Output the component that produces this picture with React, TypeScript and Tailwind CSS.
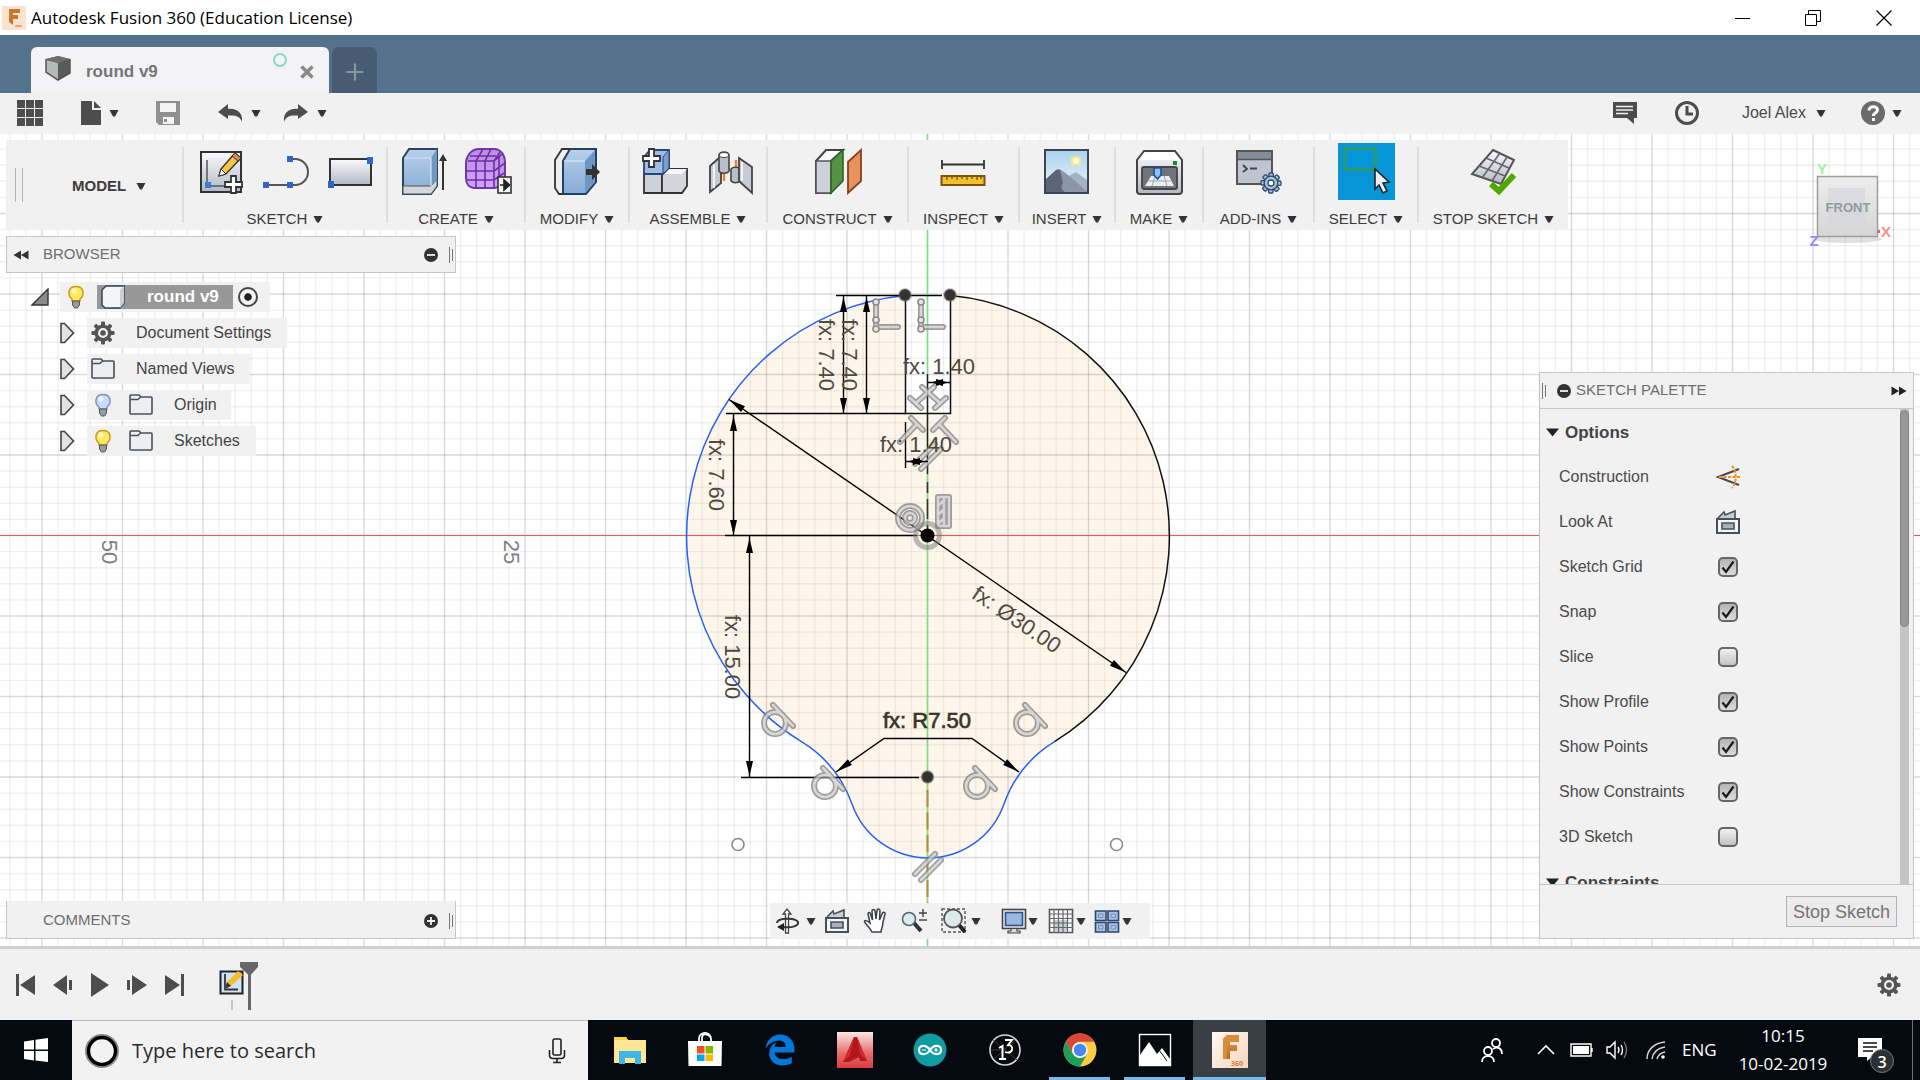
import React from 'react';
import { FaEdgeLegacy } from 'react-icons/fa';

type IconProps = { children: React.ReactNode; box?: number; className?: string };

const Icon: React.FC<IconProps> = ({ children, box = 48, className = 'size-12' }) => (
  <svg viewBox={`0 0 ${box} ${box}`} className={className} fill="none" aria-hidden="true">
    {children}
  </svg>
);

const Caret: React.FC = () => (
  <svg viewBox="0 0 10 8" className="h-2 w-2.5 shrink-0" aria-hidden="true">
    <path d="M0.5 1H9.5L6 7.5H4Z" fill="#333" />
  </svg>
);

const Gear: React.FC<{ color: string; hole: string }> = ({ color, hole }) => (
  <Icon box={24} className="size-6">
    {[0, 45, 90, 135, 180, 225, 270, 315].map((a) => (
      <rect key={a} x="10" y="0.5" width="4" height="6" rx="1" fill={color} transform={`rotate(${a} 12 12)`} />
    ))}
    <circle cx="12" cy="12" r="6.8" stroke={color} strokeWidth="3.6" fill={hole} />
    <circle cx="12" cy="12" r="2.8" fill={color} />
  </Icon>
);

const Defs: React.FC = () => (
  <svg className="absolute size-0" aria-hidden="true">
    <defs>
      <linearGradient id="steel" x1="0" y1="0" x2="0" y2="1">
        <stop offset="0" stopColor="#fbfbfc" />
        <stop offset="1" stopColor="#b3b8c6" />
      </linearGradient>
      <linearGradient id="blue" x1="0" y1="0" x2="0" y2="1">
        <stop offset="0" stopColor="#b9d0ea" />
        <stop offset="1" stopColor="#86abd6" />
      </linearGradient>
      <linearGradient id="purple" x1="0" y1="0" x2="0" y2="1">
        <stop offset="0" stopColor="#b98be0" />
        <stop offset="1" stopColor="#d3a2ff" />
      </linearGradient>
      <linearGradient id="sky" x1="0" y1="0" x2="0" y2="1">
        <stop offset="0" stopColor="#a9d3ec" />
        <stop offset="1" stopColor="#eef8fc" />
      </linearGradient>
      <linearGradient id="cad" x1="0" y1="0" x2="0" y2="1">
        <stop offset="0" stopColor="#fbe9e4" />
        <stop offset="0.6" stopColor="#e8696a" />
        <stop offset="1" stopColor="#dc3a43" />
      </linearGradient>
      <linearGradient id="peach" x1="0" y1="0" x2="1" y2="1">
        <stop offset="0" stopColor="#fffaf6" />
        <stop offset="1" stopColor="#f8d5ba" />
      </linearGradient>
      <linearGradient id="fold" x1="0" y1="0" x2="0" y2="1">
        <stop offset="0" stopColor="#e39a4a" />
        <stop offset="1" stopColor="#b96a1f" />
      </linearGradient>
      <linearGradient id="cube" x1="0" y1="0" x2="0" y2="1">
        <stop offset="0" stopColor="#ececec" />
        <stop offset="1" stopColor="#d2d2d2" />
      </linearGradient>
    </defs>
  </svg>
);

/* ---------- toolbar icons ---------- */

const NewSketchIcon = () => (
  <Icon>
    <rect x="4" y="4" width="40" height="40" fill="url(#steel)" stroke="#333" strokeWidth="2" />
    <path d="M10 12V38H36" stroke="#555" strokeWidth="1.5" />
    <rect x="8" y="34" width="6" height="6" fill="#3b7fd4" />
    <path d="M38 5L44 10L29 26L22 28L24 21Z" fill="#f6c544" stroke="#333" strokeWidth="1.4" />
    <path d="M38 5L44 10L41 13L35 8Z" fill="#d98d52" stroke="#333" />
    <path d="M24 21L29 26L22 28Z" fill="#fff" stroke="#333" />
    <path d="M34 28H39V34H45V39H39V45H34V39H28V34H34Z" fill="#fff" stroke="#333" strokeWidth="1.8" />
  </Icon>
);

const LineIcon = () => (
  <Icon>
    <path d="M29 11H34A13 13 0 0 1 34 37H5" stroke="#555" strokeWidth="2" />
    <path d="M26 8h6v6h-6zM2 34h6v6H2zM26 34h6v6h-6z" fill="#2f66cc" />
  </Icon>
);

const RectangleIcon = () => (
  <Icon>
    <rect x="5" y="11" width="41" height="26" fill="url(#steel)" stroke="#333" strokeWidth="2" />
    <path d="M42 9h6v7h-6zM3 33h6v7H3z" fill="#2f66cc" />
  </Icon>
);

const ExtrudeIcon = () => (
  <Icon>
    <path d="M3 10L9 1H37V38L31 46H3Z" fill="url(#blue)" stroke="#2c4260" strokeWidth="2" />
    <path d="M3 38H31L37 31V38L31 46H3Z" fill="#d3d6dd" stroke="#555" />
    <path d="M31 10L37 1V31L31 38Z" fill="#6f97c6" />
    <path d="M4 10H31V38" stroke="#d8e6f5" strokeWidth="1.2" />
    <path d="M43 42V10" stroke="#333" strokeWidth="2" />
    <path d="M39 13L43 6L47 13Z" fill="#333" />
  </Icon>
);

const FormIcon = () => (
  <Icon>
    <path d="M2 16C2 7 8 1 15 1H31C38 2 41 8 41 14V30C40 37 36 40 30 40H10C4 39 2 36 2 30Z" fill="url(#purple)" stroke="#7038a8" strokeWidth="2" />
    <path d="M2 23H30L41 15M3 32H30L40 25M4 13H30L38 6M12 40V13L19 1M21 40V13L27 1M30 40V13L36 4M6 8H32M35 36V9" stroke="#6b2fa3" strokeWidth="1.6" />
    <rect x="34" y="29" width="13" height="16" fill="#f4f4f4" stroke="#333" strokeWidth="1.6" />
    <path d="M36 37H40M40 32V42L45.500 37Z" stroke="#222" fill="#222" strokeWidth="1.6" />
  </Icon>
);

const PressPullIcon = () => (
  <Icon>
    <path d="M2 12L9 1H18L12 12V46H6L2 40Z" fill="#eceef2" stroke="#333" strokeWidth="1.8" />
    <path d="M10 13L17 1H43V34L33 46H10Z" fill="url(#blue)" stroke="#24405f" strokeWidth="2" />
    <path d="M32 13L42 2V34L32 45Z" fill="#6f97c6" />
    <path d="M11 13H32" stroke="#dbe8f5" strokeWidth="1.2" />
    <path d="M33 21H39V16L47 24L39 32V27H33Z" fill="#333" />
  </Icon>
);

const ComponentIcon = () => (
  <Icon>
    <path d="M2 26H20V45H2Z" fill="#cdd1d9" stroke="#333" strokeWidth="1.8" />
    <path d="M20 26L26 21H45V38L40 45H20Z" fill="#d3d6dd" stroke="#333" strokeWidth="1.8" />
    <path d="M20 26L26 21H45L40 26Z" fill="#f6f6f6" />
    <path d="M2 9L8 2H27V20L21 26H2Z" fill="#9dbde5" stroke="#27457a" strokeWidth="1.8" />
    <path d="M21 9L27 2V20L21 26Z" fill="#7d9fcc" stroke="#27457a" />
    <path d="M7 1H12V8H18V13H12V19H7V13H1V8H7Z" fill="#fff" stroke="#333" strokeWidth="1.8" />
  </Icon>
);

const JointIcon = () => (
  <Icon>
    <path d="M18 22V33M30 12V22" stroke="#f08020" strokeWidth="2.4" />
    <path d="M4 18L15 8V35L4 44Z" fill="#c5cad4" stroke="#444" strokeWidth="1.8" />
    <path d="M8 16V40" stroke="#f2f3f6" strokeWidth="2" />
    <path d="M13 7A5 3 0 0 1 23 7V21A5 3 0 0 1 13 23Z" fill="#b9bec9" stroke="#444" strokeWidth="1.6" />
    <ellipse cx="18" cy="7" rx="4.500" ry="2.500" fill="#fff" stroke="#444" />
    <path d="M25 21A5 3 0 0 1 34 21V33A5 3 0 0 1 25 33Z" fill="#b9bec9" stroke="#444" strokeWidth="1.6" />
    <path d="M33 10L46 19V45L33 33Z" fill="#c5cad4" stroke="#444" strokeWidth="1.8" />
    <path d="M36 14V33" stroke="#f2f3f6" strokeWidth="2" />
  </Icon>
);

const PlaneIcon = () => (
  <Icon>
    <path d="M2 13L12 2H29L17 13V45H2Z" fill="#fbfbfb" stroke="#444" strokeWidth="2" />
    <path d="M2 13H17V45H2Z" fill="#cdd1dc" stroke="#555" strokeWidth="1.6" />
    <path d="M17 13L29 2V33L17 45Z" fill="#559243" stroke="#2c6620" strokeWidth="1.6" />
    <path d="M34 14L47 2V33L34 45Z" fill="#e6935f" stroke="#8a4019" strokeWidth="1.8" />
  </Icon>
);

const MeasureIcon = () => (
  <Icon>
    <path d="M2 12V21M44 12V21M2 16.500H44" stroke="#333" strokeWidth="1.8" />
    <rect x="1.500" y="28" width="43" height="9" fill="#f2c02c" stroke="#7a5410" strokeWidth="2" />
    <path d="M7 28v4M12 28v3M17 28v4M22 28v3M27 28v4M32 28v3M37 28v4M41 28v3" stroke="#7a5410" strokeWidth="1.3" />
  </Icon>
);

const CanvasIcon = () => (
  <Icon>
    <rect x="2" y="2" width="43" height="43" fill="url(#sky)" stroke="#3a4658" strokeWidth="2" />
    <rect x="29" y="9" width="8" height="8" rx="3" fill="#fffbe0" stroke="#fbe395" strokeWidth="2" />
    <path d="M22 30L33 24L44 32V44H26Z" fill="#a5b3c1" />
    <path d="M3 31L13 22Q16 20 19 23L44 44H3Z" fill="#5d6475" />
    <path d="M17 22Q22 23 44 44H22Q16 40 20 35Z" fill="#8b96a8" />
  </Icon>
);

const PrintIcon = () => (
  <Icon>
    <path d="M2 12L9 3H40L47 12V43Q47 46 44 46H5Q2 46 2 43Z" fill="url(#steel)" stroke="#444" strokeWidth="2" />
    <path d="M4 12L10 4.500H39L45 12Z" fill="#fff" />
    <rect x="7" y="19" width="35" height="22" rx="2" fill="#6f737c" stroke="#444" strokeWidth="1.800" />
    <path d="M16 28H34L39 38H10Z" fill="#eceef2" />
    <path d="M13 33H37M20 28L17 38M29 28L32 38" stroke="#9aa" />
    <path d="M19 20H26V27L22.500 31L19 27Z" fill="#8fc0ee" stroke="#1d4f9c" strokeWidth="1.600" />
    <rect x="38" y="13" width="4" height="4" fill="#1d8a1d" />
  </Icon>
);

const ScriptIcon = () => (
  <Icon>
    <rect x="2" y="3" width="35" height="33" fill="#bfc4d1" stroke="#555" strokeWidth="2" />
    <rect x="3" y="4" width="33" height="7" fill="#868b97" />
    <path d="M2 11.500H37" stroke="#555" strokeWidth="1.500" />
    <path d="M8 17L12 21L8 24M15 20.500H22" stroke="#444" strokeWidth="1.800" />
    {[0, 45, 90, 135, 180, 225, 270, 315].map((a) => (
      <rect key={a} x="34" y="25" width="4.400" height="5" rx="1" fill="#a9c2e0" stroke="#2f4a6e" strokeWidth="1.300" transform={`rotate(${a} 36 35)`} />
    ))}
    <circle cx="36" cy="35" r="6.800" fill="#a9c2e0" stroke="#2f4a6e" strokeWidth="1.300" />
    <circle cx="36" cy="35" r="3" fill="#fff" stroke="#2f4a6e" strokeWidth="1.300" />
  </Icon>
);

const SelectIcon = () => (
  <Icon box={57} className="size-[57px] bg-[#0696d7]">
    <rect x="6.500" y="5.500" width="31" height="21" stroke="#3f9a3a" strokeWidth="2" />
    <path d="M37 26L51 39L45 40L49 48L45 50L41 42L37 46Z" fill="#eceef4" stroke="#222" strokeWidth="1.600" />
  </Icon>
);

const StopSketchIcon = () => (
  <Icon>
    <path d="M23 2L44 12L31 36L2 26Z" fill="url(#steel)" stroke="#555" strokeWidth="2" />
    <path d="M30 5L12 30M37 9L22 33M16 10L39 20M9 18L35 28" stroke="#666" strokeWidth="1.600" />
    <path d="M21 36L29 43L44 27" stroke="#4fa800" strokeWidth="6" />
  </Icon>
);

const toolGroups = [
  { label: 'SKETCH', width: 'w-[204px]', tools: [NewSketchIcon, LineIcon, RectangleIcon] },
  { label: 'CREATE', width: 'w-[138px]', tools: [ExtrudeIcon, FormIcon] },
  { label: 'MODIFY', width: 'w-[104px]', tools: [PressPullIcon] },
  { label: 'ASSEMBLE', width: 'w-[138px]', tools: [ComponentIcon, JointIcon] },
  { label: 'CONSTRUCT', width: 'w-[141px]', tools: [PlaneIcon] },
  { label: 'INSPECT', width: 'w-[111px]', tools: [MeasureIcon] },
  { label: 'INSERT', width: 'w-[96px]', tools: [CanvasIcon] },
  { label: 'MAKE', width: 'w-[88px]', tools: [PrintIcon] },
  { label: 'ADD-INS', width: 'w-[111px]', tools: [ScriptIcon] },
  { label: 'SELECT', width: 'w-[104px]', tools: [SelectIcon] },
  { label: 'STOP SKETCH', width: 'w-[151px]', tools: [StopSketchIcon] },
];

/* ---------- window chrome ---------- */

const TitleBar: React.FC = () => (
  <header className="flex h-[35px] items-center justify-between bg-white pl-0.5">
    <div className="flex items-center gap-[5px]">
      <Icon box={24} className="size-6">
        <rect width="24" height="24" fill="#fbe3cf" />
        <path d="M7 3H18V7H11V9H16V13H11V19L7 16Z" fill="#c8772c" />
        <path d="M13 20H20" stroke="#e6a878" strokeWidth="2" />
      </Icon>
      <h1 className="font-['Open_Sans',sans-serif] text-[17px] whitespace-nowrap text-black">Autodesk Fusion 360 (Education License)</h1>
    </div>
    <div className="flex h-full">
      <button aria-label="Minimize" className="grid w-[70px] place-items-center">
        <Icon box={16} className="size-4"><path d="M0 8.500H15" stroke="#000" /></Icon>
      </button>
      <button aria-label="Restore" className="grid w-[70px] place-items-center">
        <Icon box={16} className="size-4"><path d="M0.500 4.500h11v11h-11zM3.500 4V0.500h12v11H12" stroke="#000" /></Icon>
      </button>
      <button aria-label="Close" className="grid w-[72px] place-items-center">
        <Icon box={16} className="size-4"><path d="M0.500 0.500L15.500 15.500M15.500 0.500L0.500 15.500" stroke="#000" strokeWidth="1.200" /></Icon>
      </button>
    </div>
  </header>
);

const TabBar: React.FC = () => (
  <nav className="flex h-[58px] items-end gap-[3px] bg-[#55728d] pl-[31px]">
    <div className="flex h-[46px] w-[298px] items-center rounded-t-md bg-[#f3f3f5] pr-2.5 pl-3.5">
      <Icon box={26} className="mb-1 size-[26px]">
        <path d="M1 4L13 1L25 4V18L13 25L1 17Z" fill="#5a5a5a" />
        <path d="M1 5L13 8V25L1 17Z" fill="#b5b8b8" />
        <path d="M1 4L13 1L25 4L13 8Z" fill="#707070" />
        <path d="M1 4V17L13 25L25 18V4" stroke="#555" strokeWidth="1.500" />
      </Icon>
      <a href="#round" className="ml-[15px] grow pt-1 text-[17px] font-bold text-[#757575]">round v9</a>
      <span className="mr-2 mb-5 size-3.5 rounded-full border-2 border-[#8ed6c8]" />
      <button aria-label="Close tab" className="grid size-6 place-items-center pt-1">
        <Icon box={14} className="size-3.5"><path d="M1.500 1.500L12.500 12.500M12.500 1.500L1.500 12.500" stroke="#8b8b8b" strokeWidth="3.600" /></Icon>
      </button>
    </div>
    <button aria-label="New tab" className="grid h-[46px] w-[45px] place-items-center rounded-t-md bg-[#475c73] pt-1">
      <Icon box={18} className="size-[18px]"><path d="M9 0.500V17.500M0.500 9H17.500" stroke="#8b939c" strokeWidth="2.200" /></Icon>
    </button>
  </nav>
);

const QuickAccess: React.FC = () => (
  <div className="flex h-[41px] items-center justify-between bg-[#f1f1f1] pr-[18px] pb-0.5 pl-[17px]">
    <div className="flex items-center">
      <button aria-label="Data panel">
        <Icon box={26} className="size-[26px]">
          {[0, 9, 18].map((y) => [0, 9, 18].map((x) => <rect key={`${x}-${y}`} x={x} y={y} width="8" height="8" fill="#4d4d4d" />))}
        </Icon>
      </button>
      <button aria-label="File" className="ml-9 flex items-center gap-1">
        <Icon box={26} className="size-[26px]">
          <path d="M2 1H13V10H22V25H2Z" fill="#4d4d4d" />
          <path d="M15 1L22 8H15Z" fill="#4d4d4d" />
        </Icon>
        <Caret />
      </button>
      <button aria-label="Save" className="ml-9">
        <Icon box={26} className="size-[26px]">
          <path d="M1 1H25V25H4L1 22Z" fill="#8f8f8f" />
          <path d="M5 3H21V12H5ZM8 17H19V24H8Z" fill="#f4f4f4" />
          <rect x="9" y="19" width="3" height="3" fill="#8f8f8f" />
        </Icon>
      </button>
      <button aria-label="Undo" className="ml-9 flex items-center gap-2">
        <Icon box={26} className="size-[26px]">
          <path d="M1 12L11 4V9C20 8 26 13 25 22C23 16 19 15 11 15.500V19Z" fill="#4d4d4d" />
        </Icon>
        <Caret />
      </button>
      <button aria-label="Redo" className="ml-[22px] flex items-center gap-2">
        <Icon box={26} className="size-[26px]">
          <path d="M25 12L15 4V9C6 8 0 13 1 22C3 16 7 15 15 15.500V19Z" fill="#4d4d4d" />
        </Icon>
        <Caret />
      </button>
    </div>
    <div className="flex items-center">
      <button aria-label="Notifications">
        <Icon box={26} className="size-[26px]">
          <path d="M1 2H25V18H22V24L15 18H1Z" fill="#4d4d4d" />
          <path d="M4 6.500H21M4 10H21M4 13.500H16" stroke="#f1f1f1" strokeWidth="1.400" />
        </Icon>
      </button>
      <button aria-label="Job status" className="ml-9">
        <Icon box={26} className="size-[26px]">
          <circle cx="13" cy="13" r="10.500" stroke="#4d4d4d" strokeWidth="3" />
          <path d="M13 6V14H19" stroke="#4d4d4d" strokeWidth="3" />
        </Icon>
      </button>
      <button className="ml-[42px] flex items-center gap-2.5 text-base text-[#4a4a4a]">Joel Alex <Caret /></button>
      <button aria-label="Help" className="ml-[34px] flex items-center gap-1.5">
        <Icon box={26} className="size-[26px]">
          <circle cx="13" cy="13" r="12" fill="#6b6b6b" />
          <path d="M9 10.500C9 5.500 17.500 5.500 17.500 10C17.500 13 13.500 12.500 13.500 16M13.500 18V21" stroke="#fff" strokeWidth="3" />
        </Icon>
        <Caret />
      </button>
    </div>
  </div>
);

const Toolbar: React.FC = () => (
  <div className="flex items-stretch bg-[#f1f1f1]">
    <div className="flex w-[176px] items-center pl-[9px]">
      <span className="h-[34px] w-2 border-x border-[#b4b4b4]" />
      <button className="ml-[49px] flex items-center gap-2.5 pt-0.5 text-[15px] font-bold text-[#3c3c3c]">MODEL <Caret /></button>
    </div>
    {toolGroups.map(({ label, width, tools }) => (
      <div key={label} className={`flex ${width}`}>
        <span className="my-[7px] w-0.5 bg-[#dedede]" />
        <div className="flex grow flex-col items-center pt-[3px]">
          <div className="flex h-[57px] items-center">
            {tools.map((Tool, i) => (
              <button key={i} aria-label={`${label} ${i + 1}`} className="grid w-16 place-items-center"><Tool /></button>
            ))}
          </div>
          <button className="mt-2 flex h-[22px] items-center gap-1.5 text-[15px] whitespace-nowrap text-[#3c3c3c]">{label} <Caret /></button>
        </div>
      </div>
    ))}
  </div>
);

const ViewCube: React.FC = () => (
  <svg viewBox="1800 155 100 100" className="mt-[15px] mr-5 size-[100px]" fill="none">
    <ellipse cx="1848" cy="239" rx="34" ry="4" fill="#000" opacity="0.12" />
    <rect x="1817.500" y="176.500" width="60" height="60" fill="url(#cube)" fillOpacity="0.92" stroke="#9d9d9d" strokeWidth="1.500" />
    <rect x="1828" y="188" width="37" height="37" fill="#d3d6da" opacity="0.6" />
    <g className="font-['Liberation_Sans',sans-serif] font-bold" textAnchor="middle">
      <text x="1848" y="212" fontSize="13" fill="#9599a0">FRONT</text>
      <text x="1822" y="174" fontSize="15" fill="#9bf59b">Y</text>
      <text x="1886" y="237" fontSize="15" fill="#ff8c8c">X</text>
      <text x="1814" y="246" fontSize="15" fill="#8c8cff">Z</text>
    </g>
    <path d="M1878 231.500H1880" stroke="#ff5050" strokeWidth="3" />
  </svg>
);

/* ---------- sketch canvas ---------- */

const CX = 927.5;
const CY = 535.5;
const MM = 16.1;

const range = (from: number, to: number) => Array.from({ length: to - from + 1 }, (_, i) => from + i);

const Glyph: React.FC<{ d: string }> = ({ d }) => (
  <g strokeLinecap="round" strokeLinejoin="round" opacity="0.8">
    <path d={d} stroke="#868686" strokeWidth="6" />
    <path d={d} stroke="#cfcfcf" strokeWidth="2.600" />
  </g>
);

const tangent = (x: number, y: number) =>
  `M${x - 11} ${y}a11 11 0 1 0 22 0a11 11 0 1 0 -22 0M${x - 2} ${y - 18}L${x + 18} ${y + 3}`;

const Arrow: React.FC<{ x: number; y: number; angle: number; size?: number }> = ({ x, y, angle, size = 15 }) => (
  <path d={`M0 0L${-size} -3.500V3.500Z`} fill="#000" transform={`translate(${x} ${y}) rotate(${angle})`} />
);

const dims = [
  { text: 'fx: 7.40', x: 827, y: 355, angle: 90 },
  { text: 'fx: 7.40', x: 850, y: 355, angle: 90 },
  { text: 'fx: 7.60', x: 717, y: 475, angle: 90 },
  { text: 'fx: 15.00', x: 733, y: 657, angle: 90 },
  { text: 'fx: 1.40', x: 939, y: 366, angle: 0 },
  { text: 'fx: 1.40', x: 916, y: 444, angle: 0 },
  { text: 'fx: Ø30.00', x: 1017, y: 619, angle: 34 },
];

const SketchCanvas: React.FC = () => (
  <svg viewBox="0 134 1920 812" preserveAspectRatio="xMidYMid slice" className="absolute inset-0 size-full bg-white" fill="none">
    <path
      d="M905.500 295.600A241.500 241.500 0 0 0 801.500 741.700A120.750 120.750 0 0 1 852.100 804.300A80.500 80.500 0 0 0 1003.900 804.300A120.750 120.750 0 0 1 1054.500 741.700A241.500 241.500 0 0 0 950.500 295.600V414H905.500Z"
      fill="#fff6eb"
    />
    <g stroke="#000">
      {range(-58, 62).map((i) => (
        <path key={`v${i}`} d={`M${CX + i * MM} 134V946`} strokeWidth="1.400" opacity={i % 5 === 0 ? 0.15 : 0.06} />
      ))}
      {range(-25, 25).map((i) => (
        <path key={`h${i}`} d={`M0 ${CY + i * MM}H1920`} strokeWidth="1.400" opacity={i % 5 === 0 ? 0.15 : 0.06} />
      ))}
    </g>
    <path d={`M0 ${CY}H1920`} stroke="#e4595c" strokeWidth="1.200" />
    <path d={`M${CX} 134V946`} stroke="#7ee07e" strokeWidth="1.600" />

    <g className="font-['Liberation_Sans',sans-serif]" fontSize="22" textAnchor="middle" fill="#808080">
      <text transform="translate(102 552) rotate(90)">50</text>
      <text transform="translate(504 552) rotate(90)">25</text>
    </g>

    {/* construction lines */}
    <path d="M927.500 374V474" stroke="#222" strokeWidth="1.400" />
    <path d="M927.500 482V534" stroke="#333" strokeWidth="1.600" strokeDasharray="11 6 20 6" />
    <path d="M927.500 790V905" stroke="#b5883a" strokeWidth="2" strokeDasharray="17 5.500" />
    <Glyph d="M915 464L935 444M921 469L941 449" />

    {/* profile */}
    <path d="M905.500 295.600A241.500 241.500 0 0 0 801.500 741.700A120.750 120.750 0 0 1 852.100 804.300A80.500 80.500 0 0 0 1003.900 804.300A120.750 120.750 0 0 1 1054.500 741.700" stroke="#2563f0" strokeWidth="1.500" />
    <path d="M1054.500 741.700A241.500 241.500 0 0 0 950.500 295.600V413.500H905.500V295.600" stroke="#111" strokeWidth="1.500" />

    {/* dimension lines */}
    <g stroke="#000" strokeWidth="1.400">
      <path d="M836 295.500H942M843.500 295V414M866.500 295V414M726 413.500H906M733.500 414V536M725 535.500H917M749.500 536V777M741 777.500H919" />
      <path d="M928 382.500H950M905.500 461.500H928M905.500 422V468" />
      <path d="M729 399.500L1126 672.500M836 772L884 738.500H972L1019 772" />
    </g>
    <Arrow x={843.5} y={297} angle={-90} />
    <Arrow x={843.5} y={413} angle={90} />
    <Arrow x={866.5} y={297} angle={-90} />
    <Arrow x={866.5} y={413} angle={90} />
    <Arrow x={733.5} y={416} angle={-90} />
    <Arrow x={733.5} y={535} angle={90} />
    <Arrow x={749.5} y={538} angle={-90} />
    <Arrow x={749.5} y={776} angle={90} />
    <Arrow x={729} y={399.5} angle={214.5} size={17} />
    <Arrow x={1126} y={672.5} angle={34.5} size={17} />
    <Arrow x={836} y={772} angle={144.7} size={17} />
    <Arrow x={1019} y={772} angle={35.3} size={17} />
    <Arrow x={931} y={382.5} angle={180} size={12} />
    <Arrow x={948} y={382.5} angle={0} size={12} />
    <Arrow x={908} y={461.5} angle={180} size={12} />
    <Arrow x={925} y={461.5} angle={0} size={12} />

    {/* constraint glyphs */}
    {[[775, 723], [825, 786], [1027, 723], [977, 786]].map(([x, y]) => <Glyph key={`${x}`} d={tangent(x, y)} />)}
    <Glyph d="M915 874L935 854M921 880L941 860" />
    <Glyph d="M910 398L921 408M916 403L934 387M946 398L935 408M940 403L922 387" />
    <Glyph d="M911 418L923 430M917 424L900 442M945 418L933 430M939 424L956 442" />
    <Glyph d="M898 518a12 12 0 1 0 24 0a12 12 0 1 0 -24 0M905 518a5 5 0 1 0 10 0a5 5 0 1 0 -10 0" />
    <Glyph d="M938 497H949V526H938ZM944 497V526M938 506L944 500M938 515L944 509M938 524L944 518" />
    {[876, 921].map((x) => (
      <g key={x}>
        <Glyph d={`M${x} 303V327H${x + 22}`} />
        {[302, 320, 329].map((y) => <circle key={y} cx={x} cy={y} r="3" fill="#e6e6e6" stroke="#8a8a8a" strokeWidth="1.600" />)}
      </g>
    ))}

    {/* points */}
    <circle cx={CX} cy={CY} r="12" stroke="#777" strokeWidth="5" opacity="0.5" />
    <circle cx={CX} cy={CY} r="7" fill="#0a0507" />
    <circle cx="905" cy="295" r="6" fill="#333" stroke="#777" strokeOpacity="0.4" strokeWidth="2" />
    <circle cx="950" cy="295" r="6" fill="#333" stroke="#777" strokeOpacity="0.4" strokeWidth="2" />
    <circle cx={CX} cy="777" r="6" fill="#333" stroke="#777" strokeOpacity="0.4" strokeWidth="2" />
    <circle cx="738" cy="844.500" r="6" fill="#fff" stroke="#8a8a8a" strokeWidth="1.600" />
    <circle cx="1116.500" cy="844.500" r="6" fill="#fff" stroke="#8a8a8a" strokeWidth="1.600" />

    <g className="font-['Liberation_Sans',sans-serif]" fontSize="22" textAnchor="middle" fill="#4f493f">
      {dims.map(({ text, x, y, angle }, i) => (
        <text key={i} transform={`translate(${x} ${y}) rotate(${angle})`} y="8">{text}</text>
      ))}
      <text x="927" y="728" fill="#3a342c" stroke="#3a342c" strokeWidth="0.700">fx: R7.50</text>
    </g>
  </svg>
);

/* ---------- browser panel ---------- */

const RoundToggle: React.FC<{ plus?: boolean }> = ({ plus }) => (
  <Icon box={14} className="size-3.5">
    <circle cx="7" cy="7" r="7" fill="#333" />
    <path d={plus ? 'M3 7H11M7 3V11' : 'M3 7H11'} stroke="#f1f1f1" strokeWidth="1.800" />
  </Icon>
);

const Grip: React.FC = () => <span className="h-4 w-1 border-l border-[#777] py-[2px]"><span className="ml-[2px] block h-3 border-l border-[#777]" /></span>;

const Bulb: React.FC<{ on?: boolean }> = ({ on }) => (
  <Icon box={24} className="size-6">
    <path d="M8 14C3 10 4 1.500 12 1.500S21 10 16 14V16H8Z" fill={on ? '#ffe95c' : '#c9dcfa'} stroke={on ? '#c79a1e' : '#7b93c4'} strokeWidth="1.500" />
    <circle cx="10" cy="6" r="2.500" fill="#fff" opacity="0.7" />
    <path d="M8.500 16H15.500V20L13.500 23H10.500L8.500 20Z" fill="#9a9a9a" stroke="#555" />
  </Icon>
);

const Folder: React.FC = () => (
  <Icon box={24} className="size-6">
    <path d="M1 3Q1 2 2 2H10L12 4H22Q23 4 23 5V20Q23 21 22 21H2Q1 21 1 20Z" fill="#eceef2" stroke="#4a4f58" strokeWidth="1.600" />
    <path d="M1.500 6.500H9L11.500 4" stroke="#4a4f58" strokeWidth="1.400" />
  </Icon>
);

const Expander: React.FC = () => (
  <button aria-label="Expand" className="mr-3 w-[15px]">
    <svg viewBox="0 0 15 22" className="h-[22px] w-[15px]" aria-hidden="true">
      <path d="M1 1.500H4.500L13.500 11L4.500 20.500H1Z" fill="#e2e2e6" stroke="#444" strokeWidth="1.600" />
    </svg>
  </button>
);

const Browser: React.FC = () => (
  <section className="text-[#444]">
    <div className="flex h-[37px] items-center border border-[#c6c6c6] bg-[#f1f1f1] pl-1.5 text-[15px]">
      <Icon box={16} className="size-4"><path d="M8 3.500V12.500L0.500 8ZM15.500 3.500V12.500L8 8Z" fill="#333" /></Icon>
      <h2 className="ml-3.5 grow text-[#6e6e6e]">BROWSER</h2>
      <RoundToggle />
      <span className="mr-0.5 ml-[11px] flex"><Grip /></span>
    </div>
    <ul className="mt-[9px] flex flex-col gap-1.5 text-base">
      <li className="flex h-[30px] items-center pl-[25px]">
        <button aria-label="Collapse" className="w-[29px]">
          <Icon box={18} className="size-[18px]"><path d="M1 17L17 1V17Z" fill="#8b8b8b" stroke="#333" strokeWidth="1.400" /></Icon>
        </button>
        <span className="flex h-full items-center bg-[#f1f1f1] pr-3 pl-1">
          <Bulb on />
          <span className="ml-[9px] flex h-6 items-center bg-[#989898] pr-3.5 pl-1 text-[17px] font-bold text-white">
            <Icon box={24} className="mr-[22px] size-6">
              <path d="M1 5L5 1H23V18L19 23H4L1 20Z" fill="#f4f5f7" stroke="#3a4350" strokeWidth="1.500" />
              <path d="M19 5L23 1V18L19 23Z" fill="#c9cdd5" />
            </Icon>
            round v9
          </span>
          <input type="radio" defaultChecked aria-label="Activate round v9" className="ml-[5px] size-5 appearance-none rounded-full border-2 border-[#444] bg-[radial-gradient(#222_30%,#f4f4f4_36%)]" />
        </span>
      </li>
      <li className="flex h-[30px] items-center pl-[54px]">
        <Expander />
        <span className="flex h-full items-center bg-[#f1f1f1] pr-4 pl-1"><Gear color="#555" hole="#f1f1f1" /><span className="ml-[21px]">Document Settings</span></span>
      </li>
      <li className="flex h-[30px] items-center pl-[54px]">
        <Expander />
        <span className="flex h-full items-center bg-[#f1f1f1] pr-4 pl-1"><Folder /><span className="ml-[21px]">Named Views</span></span>
      </li>
      <li className="flex h-[30px] items-center pl-[54px]">
        <Expander />
        <span className="flex h-full items-center gap-3.5 bg-[#f1f1f1] pr-3.5 pl-1"><Bulb /><Folder /><span className="ml-[7px]">Origin</span></span>
      </li>
      <li className="flex h-[30px] items-center pl-[54px]">
        <Expander />
        <span className="flex h-full items-center gap-3.5 bg-[#f1f1f1] pr-4 pl-1"><Bulb on /><Folder /><span className="ml-[7px]">Sketches</span></span>
      </li>
    </ul>
  </section>
);

const Comments: React.FC = () => (
  <section className="flex h-[38px] items-center border border-t-0 border-[#c6c6c6] bg-[#f1f1f1] pt-0.5 pl-9 text-[15px]">
    <h2 className="grow text-[#6e6e6e]">COMMENTS</h2>
    <RoundToggle plus />
    <span className="mr-0.5 ml-[11px] flex"><Grip /></span>
  </section>
);

/* ---------- navigation bar ---------- */

const LookAtIcon: React.FC = () => (
  <Icon box={26} className="size-[26px]">
    <path d="M2 10H24V24H2Z" fill="#f6f7f9" stroke="#4a4f58" strokeWidth="2" />
    <path d="M7 14H19V20H7Z" fill="#a9b0bb" stroke="#4a4f58" strokeWidth="1.600" />
    <path d="M3 9L9 3L10 6L20 2V9" stroke="#4a4f58" strokeWidth="1.600" fill="#c9cdd5" />
  </Icon>
);

const navItems = [
  {
    label: 'Orbit', menu: true, space: 'ml-1', gap: 'gap-1.5',
    icon: (
      <Icon box={26} className="size-[26px]">
        <path d="M11.500 25V6H9L13 1L17 6H14.500V25Z" fill="#fff" stroke="#444" strokeWidth="1.300" />
        <path d="M3 15C3 10 21 9 24 14C25 18 18 20 9 19" stroke="#333" strokeWidth="2" />
        <path d="M3 19L10 15V23Z" fill="#222" />
      </Icon>
    ),
  },
  { label: 'Look at', menu: false, space: 'ml-2', gap: '', icon: <LookAtIcon /> },
  {
    label: 'Pan', menu: false, space: 'ml-[13px]', gap: '',
    icon: (
      <Icon box={26} className="size-[26px]">
        <path d="M9 24C7 20 4 17 1.500 14C1 12 4 12 7 15L5 6C5 4 7 4 7.500 6L9.500 12L9 3C9 1 11.500 1 12 3L13 11L14 2.500C14 0.500 17 0.500 17 3L16.500 12L19.500 5C20.500 3.500 22.500 4.500 22 6L20 14C20 19 18 21 18 24Z" fill="#fff" stroke="#3a3f48" strokeWidth="1.500" />
      </Icon>
    ),
  },
  {
    label: 'Zoom', menu: false, space: 'ml-3', gap: '',
    icon: (
      <Icon box={26} className="size-[26px]">
        <path d="M13 15L20 23" stroke="#333" strokeWidth="4" />
        <circle cx="8" cy="11" r="6.500" fill="#dcebf0" stroke="#5c6670" strokeWidth="1.600" />
        <path d="M22 1V9M18 5H26M18 12H26" stroke="#444" strokeWidth="1.400" />
      </Icon>
    ),
  },
  {
    label: 'Fit', menu: true, space: 'ml-3.5', gap: 'gap-1',
    icon: (
      <Icon box={26} className="size-[26px]">
        <rect x="1" y="1" width="23" height="23" stroke="#555" strokeDasharray="3 2" strokeWidth="1.400" />
        <path d="M18 17L24 24" stroke="#222" strokeWidth="4" />
        <circle cx="12" cy="10.500" r="9" fill="#dcebea" stroke="#555" strokeWidth="1.800" />
      </Icon>
    ),
  },
  {
    label: 'Display settings', menu: true, space: 'ml-5', gap: 'gap-px',
    icon: (
      <Icon box={26} className="size-[26px]">
        <rect x="1.500" y="1.500" width="23" height="19" fill="#f4f4f4" stroke="#444" strokeWidth="1.600" />
        <rect x="4.500" y="4.500" width="17" height="13" fill="#9bb8e0" stroke="#2f4f85" strokeWidth="1.600" />
        <path d="M10 20.500V23H7V25H19V23H16V20.500Z" fill="#ddd" stroke="#444" strokeWidth="1.200" />
      </Icon>
    ),
  },
  {
    label: 'Grid and snaps', menu: true, space: 'ml-2.5', gap: 'gap-0.5',
    icon: (
      <Icon box={26} className="size-[26px]">
        <path d="M1.500 1.500H24.500V24.500H1.500Z" fill="#fafafa" stroke="#555" strokeWidth="1.600" />
        <path d="M6 12H20V24H6Z" fill="#c9cdd5" />
        <path d="M6 1V25M10.500 1V25M15 1V25M19.500 1V25M1 6H25M1 10.500H25M1 15H25M1 19.500H25" stroke="#666" strokeWidth="1.200" />
      </Icon>
    ),
  },
  {
    label: 'Viewports', menu: true, space: 'ml-2', gap: 'gap-0.5',
    icon: (
      <Icon box={26} className="size-[26px]">
        <path d="M1.500 3H12V12.500H1.500ZM14 3H24.500V12.500H14ZM1.500 14.500H12V24H1.500ZM14 14.500H24.500V24H14Z" fill="#a9c2e4" stroke="#2f4568" strokeWidth="1.600" />
        <path d="M4.500 6H9V9.500H4.500ZM17 6H21.500V9.500H17ZM4.500 17.500H9V21H4.500ZM17 17.500H21.500V21H17Z" stroke="#6f8fbd" />
      </Icon>
    ),
  },
];

const NavBar: React.FC = () => (
  <div className="flex h-9 items-center bg-[#f1f1f1] pr-[18px]">
    {navItems.map(({ label, menu, space, gap, icon }) => (
      <button key={label} aria-label={label} className={`flex items-center ${space} ${gap}`}>
        {icon}
        {menu && <Caret />}
      </button>
    ))}
  </div>
);

/* ---------- sketch palette ---------- */

const options = [
  { label: 'Sketch Grid', checked: true },
  { label: 'Snap', checked: true },
  { label: 'Slice', checked: false },
  { label: 'Show Profile', checked: true },
  { label: 'Show Points', checked: true },
  { label: 'Show Constraints', checked: true },
  { label: '3D Sketch', checked: false },
];

const SectionTitle: React.FC<{ children: React.ReactNode }> = ({ children }) => (
  <h3 className="flex h-[45px] items-center gap-1.5 pt-0.5 pl-1.5 text-[17px] font-bold text-[#444]">
    <svg viewBox="0 0 13 9" className="h-[9px] w-[13px]" aria-hidden="true"><path d="M0 0.500H13L6.500 8.500Z" fill="#222" /></svg>
    {children}
  </h3>
);

const SketchPalette: React.FC = () => (
  <aside className="mr-1.5 flex w-[375px] flex-col border border-[#c6c6c6] bg-[#f1f1f1] text-[#4a4a4a]">
    <div className="flex h-9 items-center border-b border-[#c6c6c6] pr-1.5 pl-0.5 text-[15px]">
      <Grip />
      <span className="ml-[11px]"><RoundToggle /></span>
      <h2 className="ml-[5px] grow text-[#6e6e6e]">SKETCH PALETTE</h2>
      <Icon box={16} className="size-4"><path d="M0.500 3.500V12.500L8 8ZM8 3.500V12.500L15.500 8Z" fill="#222" /></Icon>
    </div>
    <div className="flex h-[475px] overflow-hidden">
      <div className="grow">
        <SectionTitle>Options</SectionTitle>
        <div className="flex h-[45px] items-center pl-[19px] text-base">
          <label htmlFor="construction" className="w-[150px]">Construction</label>
          <button id="construction" className="grid w-[38px] place-items-center">
            <Icon box={26} className="size-[26px]">
              <path d="M24 5L3 13L24 21" stroke="#4a4a4a" strokeWidth="2" />
              <path d="M4 13H25M17 2C22 8 22 18 17 24" stroke="#f39019" strokeWidth="2" strokeDasharray="3 1.500" />
            </Icon>
          </button>
        </div>
        <div className="flex h-[45px] items-center pl-[19px] text-base">
          <label htmlFor="look-at" className="w-[150px]">Look At</label>
          <button id="look-at" className="grid w-[38px] place-items-center"><LookAtIcon /></button>
        </div>
        {options.map(({ label, checked }) => (
          <label key={label} className="flex h-[45px] items-center pl-[19px] text-base">
            <span className="w-[150px]">{label}</span>
            <span className="grid w-[38px] place-items-center">
              <input type="checkbox" defaultChecked={checked} className="peer col-start-1 row-start-1 size-5 appearance-none rounded-[5px] border-2 border-[#666] bg-linear-to-b from-[#f0f0f0] to-[#c4c4c4] checked:from-[#b4b4b4] checked:to-[#dcdcdc]" />
              <svg viewBox="0 0 20 20" className="pointer-events-none invisible col-start-1 row-start-1 size-5 peer-checked:visible" fill="none" aria-hidden="true">
                <path d="M4.500 10.500L8 15L15.500 4.500" stroke="#1a1a1a" strokeWidth="2.200" />
              </svg>
            </span>
          </label>
        ))}
        <SectionTitle>Constraints</SectionTitle>
      </div>
      <div className="mr-1 w-[9px] bg-[#c3c4c6]">
        <div className="mt-px h-[217px] rounded-full border border-[#858585] bg-[#98989a]" />
      </div>
    </div>
    <div className="flex h-[54px] items-center justify-end border-t border-[#c6c6c6] pr-4">
      <button className="h-[31px] border border-[#b4b4b4] bg-[#ebebeb] px-1.5 text-lg leading-none text-[#757575]">Stop Sketch</button>
    </div>
  </aside>
);

/* ---------- timeline ---------- */

const transport = [
  { label: 'Go to start', d: 'M3 2H6V24H3ZM22 3V23L7 13Z' },
  { label: 'Step back', d: 'M17 3V23L3 13ZM19 8H22V18H19Z' },
  { label: 'Play', d: 'M4 1V25L22 13Z' },
  { label: 'Step forward', d: 'M8 3V23L23 13ZM3 8H6V18H3Z' },
  { label: 'Go to end', d: 'M4 3V23L19 13ZM20 2H23V24H20Z' },
];

const Timeline: React.FC = () => (
  <div className="flex h-[74px] items-center justify-between border-t-[3px] border-[#cfcfcf] bg-[#f1f1f1] pr-[19px] pl-[13px]">
    <div className="flex items-center gap-[11px]">
      {transport.map(({ label, d }) => (
        <button key={label} aria-label={label}>
          <Icon box={26} className="size-[26px]"><path d={d} fill="#4d4d4d" /></Icon>
        </button>
      ))}
      <button aria-label="Sketch1" className="ml-5">
        <svg viewBox="0 0 44 50" className="h-[50px] w-11" fill="none">
          <rect x="2.500" y="11.500" width="22" height="22" fill="#cfe3f6" stroke="#222" strokeWidth="2" />
          <path d="M7 14V29.500H20" stroke="#333" strokeWidth="1.800" />
          <path d="M20 11L25 15L13 26L7 29L9 22Z" fill="#f7be28" />
          <path d="M9 22L13 26L7 29Z" fill="#333" />
          <rect x="13" y="40" width="2" height="10" fill="#c4c4c4" />
          <path d="M22 2H40V7L33 14.500V50H30V14.500L22 7Z" fill="#666" />
        </svg>
      </button>
    </div>
    <button aria-label="Timeline settings"><Gear color="#555" hole="#f1f1f1" /></button>
  </div>
);

/* ---------- windows taskbar ---------- */

const apps = [
  {
    name: 'File Explorer', state: '',
    icon: (
      <>
        <path d="M2 6Q2 5 3 5H14L16 8H34V31H2Z" fill="#ffe694" />
        <path d="M2 6Q2 5 3 5H14L16 8H2Z" fill="#fcd53f" />
        <path d="M7 19H29V32H23V26H13V32H7Z" fill="#3fb6ea" />
      </>
    ),
  },
  {
    name: 'Microsoft Store', state: '',
    icon: (
      <>
        <path d="M12 10V7C12 -1 24 -1 24 7V10M15 10V6C15 1 21 1 24 6" stroke="#fff" strokeWidth="1.800" />
        <path d="M1 9H35L34.500 34H1.500Z" fill="#fff" />
        <path d="M10 14H17.500V21.500H10Z" fill="#f25022" />
        <path d="M18.500 14H26V21.500H18.500Z" fill="#7fba00" />
        <path d="M10 22.500H17.500V29H10Z" fill="#00a4ef" />
        <path d="M18.500 22.500H26V29H18.500Z" fill="#ffb900" />
      </>
    ),
  },
  { name: 'Edge', state: '', icon: <FaEdgeLegacy x="2" y="2" size={32} color="#0078d7" /> },
  {
    name: 'AutoCAD', state: '',
    icon: (
      <>
        <rect width="36" height="36" fill="url(#cad)" />
        <path d="M17 5H20L30 29H23L22 25L12 30H6Z" fill="#b3161c" />
        <path d="M17 5L13 24L6 30ZM20 5L30 29L23 22Z" fill="#d02a2e" />
        <path d="M6 30L23 20L14 25Z" fill="#7d0f14" />
      </>
    ),
  },
  {
    name: 'Arduino', state: '',
    icon: (
      <>
        <circle cx="18" cy="18" r="16.500" fill="#0f9ba0" />
        <path d="M18 18C14 12 7 13 7 18S14 24 18 18S29 13 29 18S22 24 18 18Z" stroke="#fff" strokeWidth="2.200" />
        <path d="M10 18H14M22 18H26M24 16V20" stroke="#fff" strokeWidth="1.200" />
      </>
    ),
  },
  {
    name: 'Processing', state: '',
    icon: (
      <>
        <circle cx="18" cy="18" r="15" fill="#06090d" stroke="#d8d8d8" strokeWidth="1.600" />
        <path d="M6 8L30 28M8 26L28 8M4 18H14" stroke="#3a3f38" />
        <path d="M12 16L15.500 14V27M12 27H19" stroke="#fff" strokeWidth="2" />
        <path d="M18 8H25L21 13Q26 13 25 18Q23 22 18 20" stroke="#fff" strokeWidth="1.800" />
      </>
    ),
  },
  {
    name: 'Chrome', state: 'running',
    icon: (
      <>
        <circle cx="18" cy="18" r="16.500" fill="#ffcd41" />
        <path d="M3.700 9.800A16.500 16.500 0 0 1 32.300 9.800H18A8.200 8.200 0 0 0 10.900 22.100Z" fill="#db4437" />
        <path d="M3.700 9.800A16.500 16.500 0 0 0 18 34.500L25.100 22.100A8.200 8.200 0 0 1 10.900 22.100Z" fill="#1a9e5b" />
        <circle cx="18" cy="18" r="7.800" fill="#f4f6f8" />
        <circle cx="18" cy="18" r="6.200" fill="#4587f3" />
      </>
    ),
  },
  {
    name: 'Photos', state: 'running',
    icon: (
      <>
        <rect x="2.500" y="2.500" width="31" height="31" stroke="#fff" strokeWidth="1.400" />
        <path d="M3 23L12 10L20 22L25 16L33 27V33H3Z" fill="#fff" />
        <path d="M20 15L30 29" stroke="#05090f" />
      </>
    ),
  },
  {
    name: 'Fusion 360', state: 'active',
    icon: (
      <>
        <rect width="36" height="36" fill="url(#peach)" />
        <path d="M11 7L15 3H27V10H18V13H25V19H18V27H11Z" fill="url(#fold)" />
        <path d="M11 7L15 3H27L25 8H15V27H11Z" fill="#d98c3c" />
        <text x="25" y="34" textAnchor="middle" fontSize="7" fontWeight="700" fill="#d08040">360</text>
      </>
    ),
  },
];

const Taskbar: React.FC = () => (
  <footer className="flex h-[60px] bg-[#050a10] font-['Open_Sans',sans-serif] text-[17px] text-white">
    <button aria-label="Start" className="grid w-[72px] place-items-center">
      <Icon box={24} className="size-6"><path d="M0 3.500L10 2V11.500H0ZM11.500 1.800L24 0V11.500H11.500ZM0 13H10V22.500L0 21ZM11.500 13H24V24L11.500 22.400Z" fill="#fff" /></Icon>
    </button>
    <label className="flex w-[516px] items-center border-t border-[#b8b8b8] bg-[#f2f2f2] pr-[18px] pl-3">
      <Icon box={36} className="size-9">
        <circle cx="18" cy="18" r="15.500" stroke="#8a8a8a" strokeWidth="3" />
        <circle cx="18" cy="18" r="13.500" stroke="#000" strokeWidth="3.400" />
      </Icon>
      <input type="text" placeholder="Type here to search" className="ml-3 min-w-0 grow bg-transparent text-[20px] text-[#1a1a1a] placeholder:text-[#2b2b2b]" />
      <Icon box={26} className="size-[26px]">
        <rect x="9" y="1" width="8" height="16" rx="1.500" stroke="#222" strokeWidth="1.600" />
        <path d="M5.500 12V17Q5.500 20.500 9 20.500H17Q20.500 20.500 20.500 17V12M13 20.500V24.500M9 24.500H17" stroke="#222" strokeWidth="1.600" />
      </Icon>
    </label>
    <div className="flex pl-[5px]">
      {apps.map(({ name, state, icon }) => (
        <button key={name} aria-label={name} className={`mr-0.5 flex w-[73px] flex-col items-center ${state === 'active' ? 'bg-[#3a3f45]' : ''}`}>
          <span className="grid grow place-items-center pt-[3px]"><Icon box={36} className="size-9">{icon}</Icon></span>
          <span className={`h-[3px] ${state === 'active' ? 'w-full bg-[#76b9ed]' : state === 'running' ? 'w-[61px] bg-[#76b9ed]' : 'w-0'}`} />
        </button>
      ))}
    </div>
    <div className="ml-auto flex items-center">
      <button aria-label="People">
        <Icon box={26} className="size-[26px]">
          <circle cx="17" cy="6" r="4" stroke="#fff" strokeWidth="1.800" />
          <circle cx="9" cy="14" r="4" stroke="#fff" strokeWidth="1.800" />
          <path d="M3 25C3 17 15 17 15 25M14 12C18 9 23 11 23 17" stroke="#fff" strokeWidth="1.800" />
        </Icon>
      </button>
      <button aria-label="Hidden icons" className="ml-8">
        <Icon box={18} className="size-[18px]"><path d="M1 13L9 5L17 13" stroke="#fff" strokeWidth="1.600" /></Icon>
      </button>
      <button aria-label="Battery" className="ml-[15px]">
        <Icon box={24} className="size-6"><path d="M1 6H21V18H1ZM22 10V14" stroke="#fff" strokeWidth="1.400" /><path d="M3 8H19V16H3Z" fill="#fff" /></Icon>
      </button>
      <button aria-label="Volume" className="ml-3">
        <Icon box={24} className="size-6">
          <path d="M1 9H4L9 4V20L4 15H1Z" stroke="#fff" strokeWidth="1.400" />
          <path d="M12 9Q14 12 12 15M15 7Q18 12 15 17" stroke="#fff" strokeWidth="1.400" />
          <path d="M18 4Q23 12 18 20" stroke="#777" strokeWidth="1.400" />
        </Icon>
      </button>
      <button aria-label="Network" className="ml-4">
        <Icon box={20} className="size-5">
          <path d="M1 19C1 9 9 3 19 2M6 19C7 12 12 8 19 7M11 19C12 15 14 13 19 12" stroke="#ddd" strokeWidth="1.400" />
          <circle cx="17" cy="17" r="1.800" fill="#fff" />
        </Icon>
      </button>
      <span className="ml-4 w-[34px]">ENG</span>
      <time className="ml-5 w-[94px] text-center leading-[28px]">10:15<br />10-02-2019</time>
      <button aria-label="Notifications, 3 new" className="relative ml-7">
        <Icon box={26} className="size-[26px]">
          <path d="M0 1H24V20H14L9 24V20H0Z" fill="#fff" />
          <path d="M5 6H19M5 10H19M5 14H15" stroke="#111" strokeWidth="1.300" />
        </Icon>
        <span className="absolute top-3 left-3 grid size-6 place-items-center rounded-full border border-[#777] bg-[#2c2f33] text-base font-semibold">3</span>
      </button>
      <span className="ml-[28px] h-[60px] w-2 border-l border-[#70747a]" />
    </div>
  </footer>
);

const App: React.FC = () => {
  return (
    <div className="flex min-h-screen flex-col overflow-hidden bg-white font-['Liberation_Sans',Arial,sans-serif]">
      <Defs />
      <TitleBar />
      <TabBar />
      <QuickAccess />
      <main className="relative flex grow flex-col">
        <SketchCanvas />
        <div className="relative flex grow flex-col">
          <div className="flex h-24 items-start justify-between pt-1.5 pl-1.5">
            <Toolbar />
            <ViewCube />
          </div>
          <div className="grid grow grid-cols-[1fr_auto_1fr] pb-[7px]">
            <div className="ml-1.5 flex w-[450px] flex-col justify-between pt-1.5">
              <Browser />
              <Comments />
            </div>
            <div className="self-end"><NavBar /></div>
            <div className="self-end justify-self-end"><SketchPalette /></div>
          </div>
        </div>
      </main>
      <Timeline />
      <Taskbar />
    </div>
  );
};

export default App;
